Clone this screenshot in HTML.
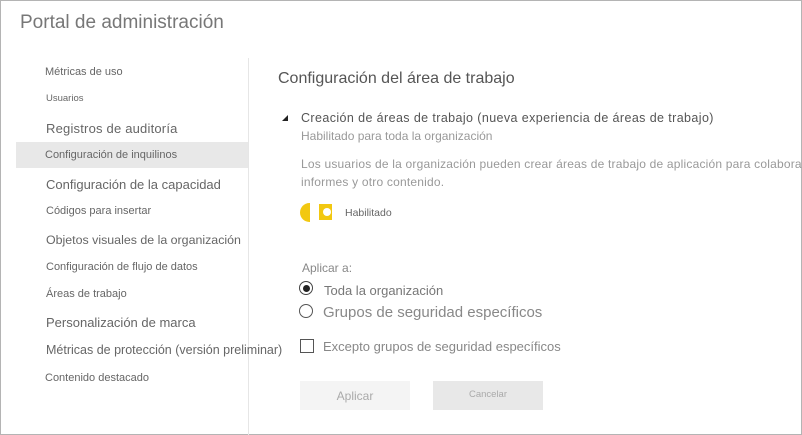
<!DOCTYPE html>
<html><head><meta charset="utf-8"><style>
body{margin:0;width:802px;height:435px;overflow:hidden;background:#fff;font-family:"Liberation Sans",sans-serif;position:relative}
.frame{position:absolute;left:0;top:0;width:800px;height:433px;border:1px solid #b4b4b4}
.t{position:absolute;white-space:nowrap;color:#666}
</style></head><body>
<div class="frame"></div>
<div class="t" style="left:20px;top:12px;font-size:19px;color:#777">Portal de administración</div>
<div style="position:absolute;left:248px;top:58px;width:1px;height:377px;background:#e6e6e6"></div>
<div style="position:absolute;left:16px;top:142px;width:232px;height:26px;background:#e8e8e8"></div>
<div class="t" style="left:45px;top:66px;font-size:11px">Métricas de uso</div>
<div class="t" style="left:46px;top:93px;font-size:9.5px">Usuarios</div>
<div class="t" style="left:46px;top:121px;font-size:13px;letter-spacing:0.2px">Registros de auditoría</div>
<div class="t" style="left:45px;top:149px;font-size:11px">Configuración de inquilinos</div>
<div class="t" style="left:46px;top:177px;font-size:13px">Configuración de la capacidad</div>
<div class="t" style="left:46px;top:205px;font-size:11px">Códigos para insertar</div>
<div class="t" style="left:46px;top:233px;font-size:12.4px">Objetos visuales de la organización</div>
<div class="t" style="left:46px;top:261px;font-size:11px">Configuración de flujo de datos</div>
<div class="t" style="left:46px;top:288px;font-size:11px">Áreas de trabajo</div>
<div class="t" style="left:46px;top:315px;font-size:13px">Personalización de marca</div>
<div class="t" style="left:46px;top:343px;font-size:12.5px">Métricas de protección (versión preliminar)</div>
<div class="t" style="left:45px;top:372px;font-size:11px">Contenido destacado</div>

<div class="t" style="left:278px;top:70px;font-size:16px;color:#555">Configuración del área de trabajo</div>
<div style="position:absolute;left:282px;top:115px;width:0;height:0;border-left:6px solid transparent;border-bottom:6px solid #222"></div>
<div class="t" style="left:301px;top:111px;font-size:12.5px;color:#555;letter-spacing:0.4px">Creación de áreas de trabajo (nueva experiencia de áreas de trabajo)</div>
<div class="t" style="left:301px;top:129px;font-size:12px;color:#999">Habilitado para toda la organización</div>
<div class="t" style="left:301px;top:155px;font-size:12px;color:#999;line-height:18px;letter-spacing:0.2px">Los usuarios de la organización pueden crear áreas de trabajo de aplicación para colabora<br>informes y otro contenido.</div>
<div style="position:absolute;left:300px;top:203px;width:10px;height:19px;background:#f2c811;border-radius:10px 0 0 10px"></div>
<div style="position:absolute;left:319px;top:204px;width:13px;height:16px;background:#f2c811"></div>
<div style="position:absolute;left:323px;top:208px;width:8px;height:8px;background:#fff;border-radius:50%"></div>
<div class="t" style="left:345px;top:207px;font-size:10.5px;color:#666">Habilitado</div>
<div class="t" style="left:302px;top:261px;font-size:12px;color:#888">Aplicar a:</div>
<div style="position:absolute;left:299px;top:281px;width:12px;height:12px;border:1.5px solid #444;border-radius:50%"></div>
<div style="position:absolute;left:303px;top:285px;width:7px;height:7px;background:#222;border-radius:50%"></div>
<div class="t" style="left:324px;top:283px;font-size:13px;color:#777">Toda la organización</div>
<div style="position:absolute;left:299px;top:304px;width:12px;height:12px;border:1.5px solid #555;border-radius:50%"></div>
<div class="t" style="left:323px;top:304px;font-size:15px;color:#888">Grupos de seguridad específicos</div>
<div style="position:absolute;left:300px;top:339px;width:12px;height:12px;border:1.5px solid #555"></div>
<div class="t" style="left:323px;top:339px;font-size:13px;color:#888">Excepto grupos de seguridad específicos</div>
<div style="position:absolute;left:300px;top:381px;width:110px;height:29px;background:#f4f4f4"></div>
<div class="t" style="left:300px;top:389px;width:110px;text-align:center;font-size:12px;color:#aaa">Aplicar</div>
<div style="position:absolute;left:433px;top:381px;width:110px;height:29px;background:#e8e8e8"></div>
<div class="t" style="left:433px;top:389px;width:110px;text-align:center;font-size:9.5px;color:#aaa">Cancelar</div>
</body></html>
